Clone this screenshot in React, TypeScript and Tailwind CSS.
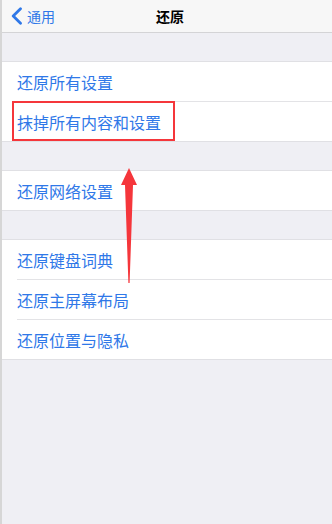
const font = "font-['Noto_Sans_CJK_SC','Noto_Sans',sans-serif]"

type Row = { label: string; highlight?: boolean }

const groups: Row[][] = [
  [{ label: '还原所有设置' }, { label: '抹掉所有内容和设置', highlight: true }],
  [{ label: '还原网络设置' }],
  [{ label: '还原键盘词典' }, { label: '还原主屏幕布局' }, { label: '还原位置与隐私' }],
]

function Group({ rows }: { rows: Row[] }) {
  return (
    <div className="border-y border-[#e0e0e4] bg-white">
      {rows.map((row, i) => (
        <div key={row.label} className={`relative ${i > 0 ? 'h-10 pt-px' : 'h-[39px]'}`}>
          {i > 0 && <div className="absolute left-[15px] right-0 top-0 h-px bg-[#e3e3e6]" />}
          <div className="flex h-[39px] items-center pl-[15px] text-[16px] text-[#2f78e8]">{row.label}</div>
          {row.highlight && (
            <div className="absolute left-[10px] top-0 h-[40px] w-[163px] border-2 border-[#f5363b]" />
          )}
        </div>
      ))}
    </div>
  )
}

export default function App() {
  return (
    <div className={`relative flex h-[524px] w-[332px] flex-col overflow-hidden border-l-2 border-[#d6d6d6] bg-[#efeff4] ${font}`}>
      <div className="relative flex h-[33px] shrink-0 items-center justify-center border-b border-[#d4d4d6] bg-[#f7f7f7] pl-[6px]">
        <div className="absolute left-[8px] top-0 flex h-full items-center gap-[4px] text-[14px] text-[#2f78e8]">
          <svg width="13" height="18" viewBox="0 0 13 18" fill="none">
            <path d="M10.5 1.8 L3.2 9 L10.5 16.2" stroke="#2f78e8" strokeWidth="2.8" strokeLinecap="round" strokeLinejoin="round" />
          </svg>
          <span>通用</span>
        </div>
        <span className="text-[14px] font-semibold text-black">还原</span>
      </div>

      <div className="flex flex-col gap-[28px] pt-[28px]">
        {groups.map((rows, i) => (
          <Group key={i} rows={rows} />
        ))}
      </div>

      {/* red arrow pointing up */}
      <svg className="absolute left-[117px] top-[166px]" width="20" height="120" viewBox="0 0 20 120">
        <polygon points="10,2 18,19 14,19 10.6,117 9.4,117 6,19 2,19" fill="#f5363b" />
      </svg>
    </div>
  )
}
